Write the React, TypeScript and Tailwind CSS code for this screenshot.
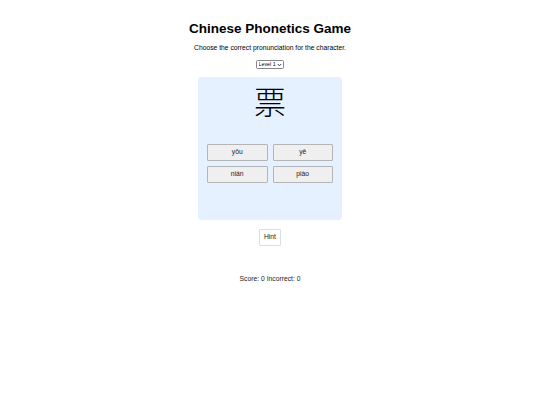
import { useState } from "react";

const options = ["yōu", "yě", "nián", "piào"];

export default function App() {
  const [score] = useState(0);
  const [incorrect] = useState(0);
  const [level, setLevel] = useState("1");

  return (
    <div className="min-h-screen bg-white text-black font-['Liberation_Sans',Arial,sans-serif]">
      <div className="flex flex-col items-center pt-[21px]">
        {/* Header */}
        <h1 className="text-[13.5px] leading-[16px] font-bold">Chinese Phonetics Game</h1>
        <p className="mt-[7px] text-[6.75px] leading-[8px]">Choose the correct pronunciation for the character.</p>

        {/* Level select */}
        <div className="mt-[8px] h-[9px] w-[28px] flex items-center border border-[#858585] rounded-[1.5px] bg-white pl-[1.5px] pr-[1.5px]">
          <select
            value={level}
            onChange={(e) => setLevel(e.target.value)}
            className="appearance-none bg-transparent outline-none text-[5.3px] leading-[7px] flex-1 min-w-0 p-0"
          >
            <option value="1">Level 1</option>
            <option value="2">Level 2</option>
            <option value="3">Level 3</option>
          </select>
          <svg width="5" height="4" viewBox="0 0 10 8" className="shrink-0">
            <path d="M1.5 2 L5 5.5 L8.5 2" fill="none" stroke="#222" strokeWidth="1.8" />
          </svg>
        </div>

        {/* Game card */}
        <div className="mt-[8px] w-[144px] h-[143px] rounded-[4px] bg-[#e5f1fe] px-[9px] pt-[7px] flex flex-col items-center">
          <div className="text-[32px] leading-[32px] font-['Noto_Sans_CJK_SC',sans-serif] font-light">票</div>
          <div className="mt-[28px] w-full grid grid-cols-2 gap-[5px]">
            {options.map((o) => (
              <button
                key={o}
                className="h-[17px] text-[6.75px] bg-[#efefef] border border-[#b5b5b5] rounded-[1px] text-[#222]"
              >
                {o}
              </button>
            ))}
          </div>
        </div>

        {/* Hint */}
        <button className="mt-[9px] w-[22px] h-[17px] text-[6.75px] bg-white border border-[#dddddd] rounded-[1px] text-[#222]">
          Hint
        </button>

        <p className="mt-[29px] text-[6.75px] leading-[8px] text-[#222]">
          Score: {score} Incorrect: {incorrect}
        </p>
      </div>
    </div>
  );
}
